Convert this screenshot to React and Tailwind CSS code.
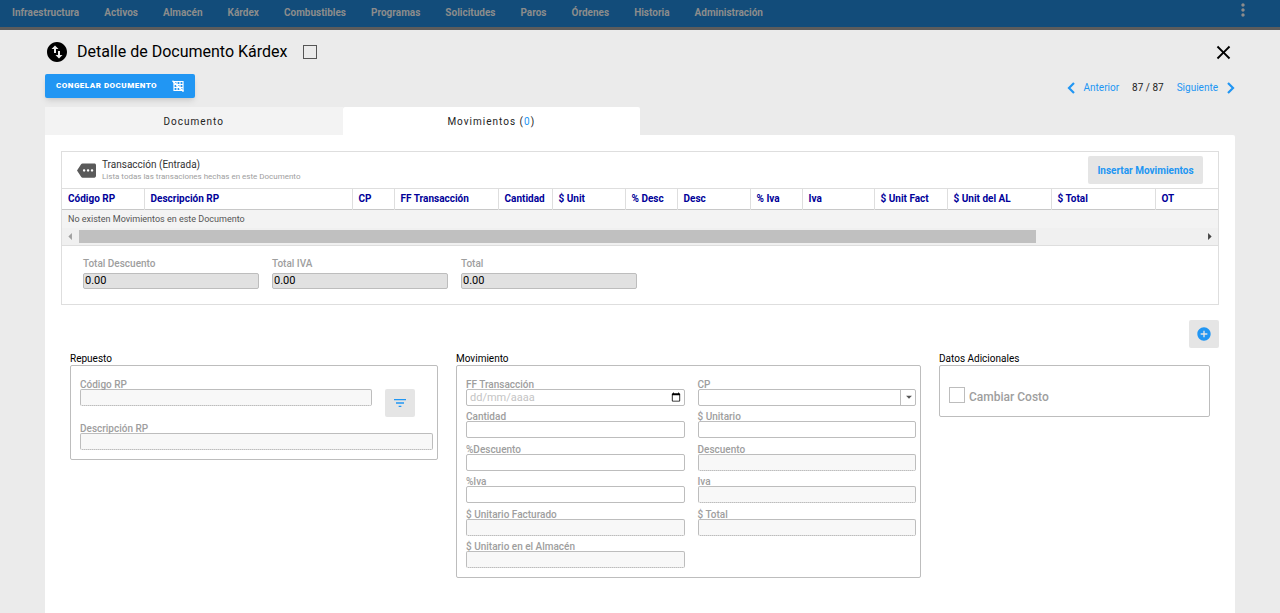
import { useState } from "react";
import {
  MdAddCircle,
  MdArrowDropDown,
  MdArrowLeft,
  MdArrowRight,
  MdCalendarToday,
  MdClose,
  MdFilterList,
  MdMore,
  MdMoreVert,
  MdSwapVerticalCircle,
} from "react-icons/md";

const menu = [
  "Infraestructura",
  "Activos",
  "Almacén",
  "Kárdex",
  "Combustibles",
  "Programas",
  "Solicitudes",
  "Paros",
  "Órdenes",
  "Historia",
  "Administración",
];

const columns = [
  { label: "Código RP", width: "w-[82px]" },
  { label: "Descripción RP", width: "w-[208px]" },
  { label: "CP", width: "w-[42px]" },
  { label: "FF Transacción", width: "w-[104px]" },
  { label: "Cantidad", width: "w-[54px]" },
  { label: "$ Unit", width: "w-[73px]" },
  { label: "% Desc", width: "w-[52px]" },
  { label: "Desc", width: "w-[73px]" },
  { label: "% Iva", width: "w-[52px]" },
  { label: "Iva", width: "w-[72px]" },
  { label: "$ Unit Fact", width: "w-[73px]" },
  { label: "$ Unit del AL", width: "w-[104px]" },
  { label: "$ Total", width: "w-[104px]" },
  { label: "OT", width: "" },
];

const totals = [
  { id: "total-descuento", label: "Total Descuento" },
  { id: "total-iva", label: "Total IVA" },
  { id: "total", label: "Total" },
];

function Chevron({ d }) {
  return (
    <svg viewBox="0 0 8 12" className="h-3 w-2" fill="none" stroke="currentColor" strokeWidth="2.2">
      <path d={d} />
    </svg>
  );
}

function GridOffIcon() {
  return (
    <svg viewBox="0 0 12 12" className="size-3" fill="none" stroke="currentColor">
      <path d="M2 1.5h9v9H2zM5 1.5v9M8 1.5v9M2 4.5h9M2 7.5h9" strokeWidth="1.2" />
      <path d="M0.5 0.8L11.5 11.6" strokeWidth="1.4" />
    </svg>
  );
}

function Field({ id, label, disabled, children }) {
  return (
    <div className="min-w-0">
      <label htmlFor={id} className="block text-[10px] leading-2 font-medium text-[#9e9e9e]">
        {label}
      </label>
      {children || (
        <input
          id={id}
          type="text"
          disabled={disabled}
          className="block h-[17px] w-full rounded-xs border border-[#bdbdbd] bg-white px-0.5 text-[11px] disabled:border-b-[#9e9e9e] disabled:[border-bottom-style:dotted] disabled:bg-[#f8f8f8]"
        />
      )}
    </div>
  );
}

function Section({ title, className, children }) {
  return (
    <section>
      <h2 className="text-[10px] leading-3 text-black">{title}</h2>
      <div className={"rounded-xs border border-[#bdbdbd] " + className}>{children}</div>
    </section>
  );
}

function Header() {
  return (
    <nav className="flex h-[30px] items-start justify-between border-b-3 border-[#5c5c5c] bg-[#124c7a] text-[#8c8c8c]">
      <div className="flex gap-[25px] pl-3">
        {menu.map((item) => (
          <a key={item} href="#" className="text-[10px] leading-[25px] font-bold">
            {item}
          </a>
        ))}
      </div>
      <button aria-label="Más opciones" className="mr-[27px]">
        <MdMoreVert size={20} />
      </button>
    </nav>
  );
}

function Transactions() {
  return (
    <section className="border border-[#dedede]">
      <div className="flex h-9 items-center justify-between px-[15px]">
        <div className="flex items-center gap-[6px]">
          <MdMore size={19} className="text-[#5a5a5a]" />
          <div className="pt-[2px]">
            <h2 className="text-[10px] leading-3 text-[#333333]">Transacción (Entrada)</h2>
            <p className="text-[8px] leading-3 text-[#9e9e9e]">
              Lista todas las transaciones hechas en este Documento
            </p>
          </div>
        </div>
        <button className="h-7 w-[115px] rounded-xs bg-[#e5e5e5] text-[10px] font-bold text-[#2196f3]">
          Insertar Movimientos
        </button>
      </div>

      <table className="w-full table-fixed border-collapse border-t border-[#dedede] text-left">
        <thead>
          <tr className="h-[21px] border-b border-[#c8c8c8]">
            {columns.map((col) => (
              <th
                key={col.label}
                className={
                  col.width +
                  " border-r border-[#dedede] pl-[6px] text-[10px] leading-3 font-bold whitespace-nowrap text-[#000099] last:border-r-0"
                }
              >
                {col.label}
              </th>
            ))}
          </tr>
        </thead>
        <tbody>
          <tr className="h-[18px] bg-[#f3f3f3]">
            <td colSpan={columns.length} className="pl-[6px] text-[9px] leading-3 text-[#555555]">
              No existen Movimientos en este Documento
            </td>
          </tr>
        </tbody>
      </table>

      {/* horizontal scroll bar */}
      <div className="flex h-[18px] items-center border-b border-[#dedede] bg-[#f0f0f0]">
        <MdArrowLeft size={17} className="shrink-0 text-[#a0a0a0]" />
        <div className="flex-1">
          <div className="h-[13px] w-[85.3%] bg-[#c0c0c0]" />
        </div>
        <MdArrowRight size={17} className="shrink-0 text-[#444444]" />
      </div>

      <div className="flex gap-[13px] px-[21px] pt-[11px] pb-[15px]">
        {totals.map((total) => (
          <div key={total.id}>
            <label htmlFor={total.id} className="block text-[10px] leading-[14px] font-medium text-[#9e9e9e]">
              {total.label}
            </label>
            <input
              id={total.id}
              type="text"
              readOnly
              value="0.00"
              className="mt-[2px] block h-4 w-44 rounded-xs border border-[#bdbdbd] bg-[#e1e1e1] px-px text-[11px] leading-[14px] text-black"
            />
          </div>
        ))}
      </div>
    </section>
  );
}

function Forms() {
  return (
    <div className="grid grid-cols-[368fr_465fr_271fr] items-start gap-[18px] px-[9px]">
      <Section title="Repuesto" className="pt-[15px] pr-1 pb-[9px] pl-[9px]">
        <div className="flex gap-[13px]">
          <div className="w-[292px]">
            <Field id="codigo-rp" label="Código RP" disabled />
          </div>
          <button aria-label="Filtrar" className="mt-2 flex h-7 w-[30px] items-center justify-center rounded-xs bg-[#e5e5e5] text-[#2196f3]">
            <MdFilterList size={16} />
          </button>
        </div>
        <div className="mt-2">
          <Field id="descripcion-rp" label="Descripción RP" disabled />
        </div>
      </Section>

      <Section title="Movimiento" className="pt-[15px] pr-1 pb-px pl-[9px]">
        <div className="grid h-[195px] auto-rows-fr grid-cols-2 gap-x-[13px]">
          <Field id="ff" label="FF Transacción">
            <div className="flex h-[17px] items-center rounded-xs border border-[#bdbdbd] px-[3px]">
              <input
                id="ff"
                type="text"
                placeholder="dd/mm/aaaa"
                className="min-w-0 flex-1 text-[11px] leading-[15px] placeholder:text-[#c4c4c4]"
              />
              <MdCalendarToday size={10} className="text-black" />
            </div>
          </Field>
          <Field id="cp" label="CP">
            <div className="relative">
              <select id="cp" className="block h-[17px] w-full appearance-none rounded-xs border border-[#bdbdbd] bg-white text-[11px]" />
              <span className="pointer-events-none absolute inset-y-0 right-0 flex w-4 items-center justify-center border-l border-[#bdbdbd]">
                <MdArrowDropDown size={14} className="text-[#555555]" />
              </span>
            </div>
          </Field>
          <Field id="cantidad" label="Cantidad" />
          <Field id="unitario" label="$ Unitario" />
          <Field id="pct-descuento" label="%Descuento" />
          <Field id="descuento" label="Descuento" disabled />
          <Field id="pct-iva" label="%Iva" />
          <Field id="iva" label="Iva" disabled />
          <Field id="unitario-facturado" label="$ Unitario Facturado" disabled />
          <Field id="mov-total" label="$ Total" disabled />
          <Field id="unitario-almacen" label="$ Unitario en el Almacén" disabled />
        </div>
      </Section>

      <Section title="Datos Adicionales" className="px-[9px] pt-[21px] pb-[13px]">
        <label className="flex items-start gap-1 text-[12px] leading-3 font-medium text-[#9e9e9e]">
          <input type="checkbox" className="size-4 appearance-none border border-[#bdbdbd] bg-white" />
          <span className="pt-1">Cambiar Costo</span>
        </label>
      </Section>
    </div>
  );
}

export default function App() {
  const [tab, setTab] = useState("movimientos");

  const tabClass = (name) =>
    "h-7 flex-1 text-[10px] tracking-[1px] text-[#222222] " +
    (tab === name ? "rounded-t-xs bg-white" : "bg-[#f3f3f3]");

  return (
    <div className="flex min-h-screen flex-col bg-[#ebebeb] font-['Roboto',sans-serif]">
      <Header />

      <main className="flex flex-1 flex-col px-[45px] pt-[10px]">
        <div className="flex h-6 items-center justify-between">
          <div className="flex items-center">
            <MdSwapVerticalCircle size={24} />
            <h1 className="ml-2 text-[16px] leading-6 text-black">Detalle de Documento Kárdex</h1>
            <input
              type="checkbox"
              aria-label="Seleccionar documento"
              className="ml-4 size-[14px] appearance-none border border-[#555555]"
            />
          </div>
          <button aria-label="Cerrar">
            <MdClose size={23} className="text-black" />
          </button>
        </div>

        <div className="mt-[10px] flex h-[26px] items-start justify-between">
          <button className="flex h-6 w-[150px] items-center justify-between rounded-xs bg-[#2196f3] px-[11px] text-[8px] font-black tracking-[0.5px] text-white uppercase shadow-md">
            Congelar Documento
            <GridOffIcon />
          </button>
          <div className="flex items-center gap-[9px] pt-[6px] text-[10px] text-[#2196f3]">
            <Chevron d="M7 1L2 6l5 5" />
            <a href="#">Anterior</a>
            <span className="mx-1 text-[#222222]">87 / 87</span>
            <a href="#">Siguiente</a>
            <Chevron d="M1 1l5 5-5 5" />
          </div>
        </div>

        <div className="mt-[7px] flex w-1/2">
          <button className={tabClass("documento")} onClick={() => setTab("documento")}>
            Documento
          </button>
          <button className={tabClass("movimientos")} onClick={() => setTab("movimientos")}>
            Movimientos (<span className="text-[#2196f3]">0</span>)
          </button>
        </div>

        <div className="flex-1 rounded-tr-xs bg-white px-4 pt-4">
          <Transactions />
          <div className="mt-[15px] mb-[5px] flex justify-end">
            <button aria-label="Agregar" className="flex h-7 w-[30px] items-center justify-center rounded-xs bg-[#e5e5e5] text-[#2196f3]">
              <MdAddCircle size={16} />
            </button>
          </div>
          <Forms />
        </div>
      </main>
    </div>
  );
}
